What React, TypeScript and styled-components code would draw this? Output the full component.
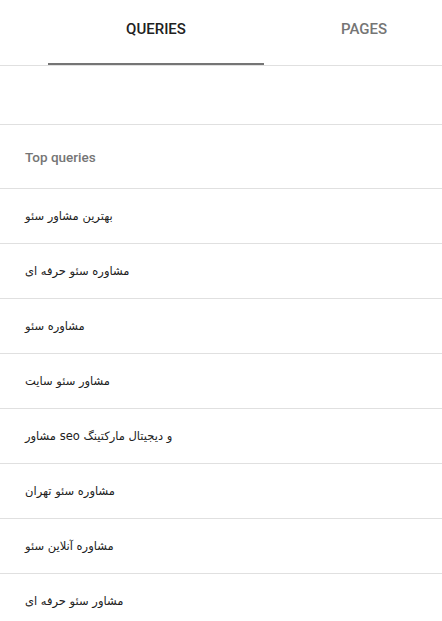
import React from "react";
import styled, { createGlobalStyle } from "styled-components";

const queries = [
  "بهترین مشاور سئو",
  "مشاوره سئو حرفه ای",
  "مشاوره سئو",
  "مشاور سئو سایت",
  "مشاور seo و دیجیتال مارکتینگ",
  "مشاوره سئو تهران",
  "مشاوره آنلاین سئو",
  "مشاور سئو حرفه ای",
];

const GlobalStyle = createGlobalStyle`
  body {
    margin: 0;
    background: #fff;
    font-family: Roboto, "DejaVu Sans", sans-serif;
  }
`;

const Page = styled.div`
  width: 442px;
  overflow: hidden;
`;

const TabBar = styled.div`
  display: flex;
  height: 65px;
  padding-left: 48px;
  border-bottom: 1px solid #e0e0e0;
`;

const Tab = styled.div<{ $active?: boolean; $w: number }>`
  flex: 0 0 ${(p) => p.$w}px;
  display: flex;
  align-items: center;
  justify-content: center;
  padding-bottom: 5px;
  box-sizing: border-box;
  font-size: 15px;
  font-weight: 500;
  text-transform: uppercase;
  color: ${(p) => (p.$active ? "#212121" : "#757575")};
  border-bottom: 2px solid ${(p) => (p.$active ? "#757575" : "transparent")};
`;

const Spacer = styled.div`
  height: 58px;
  border-bottom: 1px solid #e0e0e0;
`;

const Header = styled.div`
  height: 63px;
  display: flex;
  align-items: center;
  padding: 0 25px;
  font-size: 13.5px;
  font-weight: 500;
  color: #757575;
  border-bottom: 1px solid #e0e0e0;
`;

const Row = styled.div`
  height: 54px;
  display: flex;
  align-items: center;
  padding: 0 25px;
  color: #212121;
  border-bottom: 1px solid #e0e0e0;
`;

const Query = styled.span`
  font-family: "DejaVu Sans", sans-serif;
  font-size: 11.5px;
  direction: ltr;
  unicode-bidi: isolate;
`;

export default function App() {
  return (
    <>
      <GlobalStyle />
      <Page>
        <TabBar>
          <Tab $active $w={216}>Queries</Tab>
          <Tab $w={200}>Pages</Tab>
        </TabBar>
        <Spacer />
        <Header>Top queries</Header>
        {queries.map((q, i) => (
          <Row key={i}>
            <Query>{q}</Query>
          </Row>
        ))}
      </Page>
    </>
  );
}
